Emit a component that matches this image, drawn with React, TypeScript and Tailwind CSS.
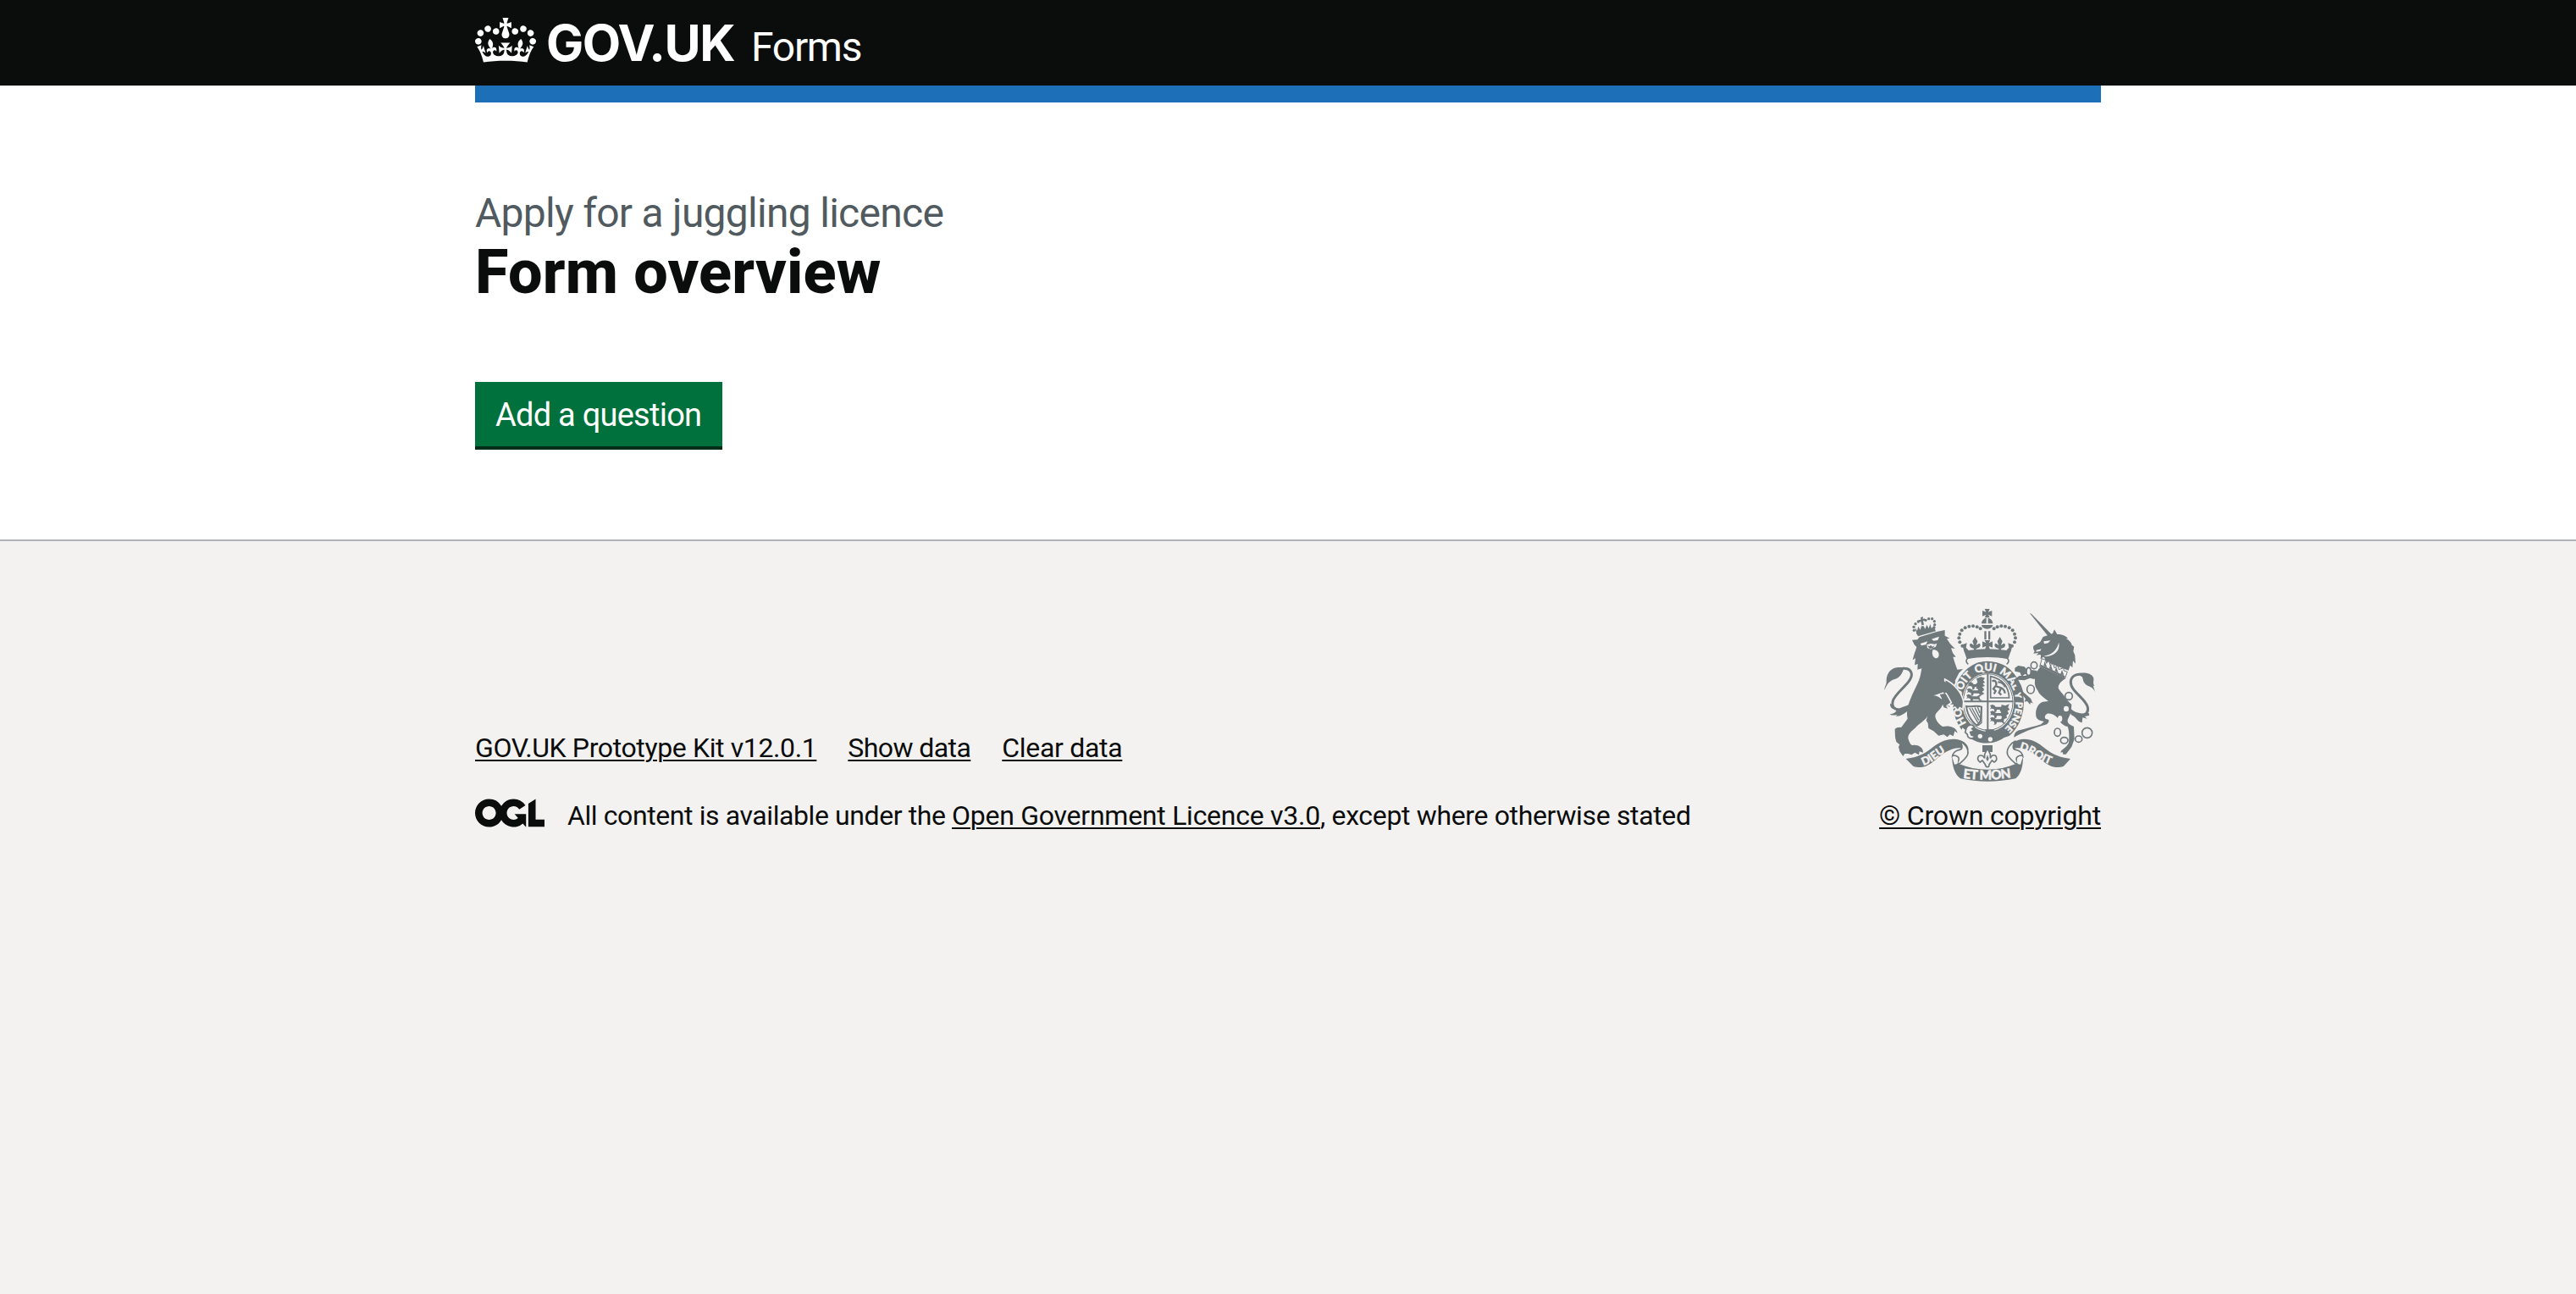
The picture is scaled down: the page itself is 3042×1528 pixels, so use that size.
const sans = "font-['Roboto','Liberation_Sans',sans-serif]";
const link = "underline decoration-2 underline-offset-[3px]";

function Crown() {
  return (
    <svg viewBox="0 0 132 97" className="mt-[21px] h-[53px] w-[72px] shrink-0 fill-white" aria-hidden="true">
      <path
        fillRule="evenodd"
        d="M25 30.2c3.5 1.5 7.7-.2 9.1-3.7 1.5-3.6-.2-7.8-3.9-9.2-3.6-1.4-7.6.3-9.1 3.9-1.4 3.5.3 7.5 3.9 9zM9 39.5c3.6 1.5 7.8-.2 9.2-3.7 1.5-3.6-.2-7.8-3.9-9.1-3.6-1.5-7.6.2-9.1 3.8-1.4 3.5.3 7.5 3.8 9zM4.4 57.2c3.5 1.5 7.7-.2 9.1-3.8 1.5-3.6-.2-7.7-3.9-9.1-3.5-1.5-7.6.3-9.1 3.8-1.4 3.5.3 7.6 3.9 9.1zm38.3-21.4c3.5 1.5 7.7-.2 9.1-3.8 1.5-3.6-.2-7.7-3.9-9.1-3.6-1.5-7.6.3-9.1 3.8-1.3 3.6.4 7.7 3.9 9.1zm64.4-5.6c-3.6 1.5-7.8-.2-9.1-3.7-1.5-3.6.2-7.8 3.8-9.2 3.6-1.4 7.7.3 9.2 3.9 1.3 3.5-.4 7.5-3.9 9zm15.9 9.3c-3.6 1.5-7.7-.2-9.1-3.7-1.5-3.6.2-7.8 3.7-9.1 3.6-1.5 7.7.2 9.2 3.8 1.5 3.5-.3 7.5-3.8 9zm4.7 17.7c-3.6 1.5-7.8-.2-9.2-3.8-1.5-3.6.2-7.7 3.9-9.1 3.6-1.5 7.7.3 9.2 3.8 1.3 3.5-.4 7.6-3.9 9.1zM89.3 35.8c-3.6 1.5-7.8-.2-9.2-3.8-1.4-3.6.2-7.7 3.9-9.1 3.6-1.5 7.7.3 9.2 3.8 1.4 3.6-.3 7.7-3.9 9.1zM69.7 17.7l8.9 4.7V9.3l-8.9 2.8c-.2-.3-.5-.6-.9-.9L72.4 0H59.6l3.5 11.2c-.3.3-.6.5-.9.9l-8.8-2.8v13.1l8.8-4.7c.3.3.6.7.9.9l-5 15.4v.1c-.2.8-.4 1.6-.4 2.4 0 4.1 3.1 7.5 7 8.1h.2c.3 0 .7.1 1 .1.4 0 .7 0 1-.1h.2c4-.6 7.1-4.1 7.1-8.1 0-.8-.1-1.7-.4-2.4V34l-5.1-15.4c.4-.2.7-.6 1-.9zM66 92.8c16.9 0 32.8 1.1 47.1 3.2 4-16.9 8.9-26.7 14-33.5l-9.6-3.4c1 4.9 1.1 7.2 0 10.2-1.5-1.4-3-4.3-4.2-8.7L108.6 76c2.8-2 5-3.2 7.5-3.3-4.4 9.4-10 11.9-13.6 11.2-4.3-.8-6.3-4.6-5.6-7.9 1-4.7 5.7-5.9 8-.5 4.3-8.7-3-11.4-7.6-8.8 7.1-7.2 7.9-13.5 2.1-21.1-8 6.1-8.1 12.3-4.5 20.8-4.7-5.4-12.1-2.5-9.5 6.2 3.4-5.2 7.9-2 7.2 3.1-.6 4.3-6.4 7.8-13.5 7.2-10.3-.9-10.9-8-11.2-13.8 2.5-.5 7.1 1.8 11 7.3L80.2 60c-4.1 4.4-8 5.3-12.3 5.4 1.4-4.4 8-11.6 8-11.6H55.5s6.4 7.2 7.9 11.6c-4.2-.1-8-1-12.3-5.4l1.4 16.4c3.9-5.5 8.5-7.7 10.9-7.3-.3 5.8-.9 12.8-11.1 13.8-7.2.6-12.9-2.9-13.5-7.2-.7-5 3.8-8.3 7.1-3.1 2.7-8.7-4.6-11.6-9.4-6.2 3.7-8.5 3.6-14.7-4.6-20.8-5.8 7.6-5 13.9 2.2 21.1-4.7-2.6-11.9.1-7.7 8.8 2.3-5.5 7.1-4.2 8.1.5.7 3.3-1.3 7.1-5.7 7.9-3.5.7-9-1.8-13.5-11.2 2.5.1 4.7 1.3 7.5 3.3l-4.7-15.4c-1.2 4.4-2.7 7.2-4.3 8.7-1.1-3-.9-5.3 0-10.2l-9.5 3.4c5 6.9 9.9 16.7 14 33.5 14.8-2.1 30.8-3.2 47.7-3.2z"
      />
    </svg>
  );
}

function OglLogo() {
  return (
    <svg viewBox="0 0 483.2 195.7" className="mr-[27px] h-[34px] w-[82px] shrink-0 fill-[#0b0c0c]" aria-hidden="true">
      <path d="M421.5 142.8V.1l-50.7 32.3v161.1h112.4v-50.7zm-122.3-9.6A47.12 47.12 0 0 1 221 97.8c0-26 21.1-47.1 47.1-47.1 16.7 0 31.4 8.7 39.7 21.8l42.7-27.2A97.63 97.63 0 0 0 268.1 0c-36.5 0-68.3 20.1-85.1 49.7A98 98 0 0 0 97.8 0C43.9 0 0 43.9 0 97.8s43.9 97.8 97.8 97.8c36.5 0 68.3-20.1 85.1-49.7a97.76 97.76 0 0 0 149.6 25.4l19.4 22.2h3v-87.8h-80l24.3 27.5zM97.8 145c-26 0-47.1-21.1-47.1-47.1s21.1-47.1 47.1-47.1 47.1 21.1 47.1 47.1S123.8 145 97.8 145" />
    </svg>
  );
}

/* Beads of the small crown on the lion and the arches of the royal crown. */
const lionBeads = [[181, 133], [180, 121], [186, 110], [196, 102], [222, 97], [233, 92], [245, 92], [253, 101], [254, 113], [252, 123]];
const crownBeads = [[352, 188], [343, 175], [340, 160], [343, 146], [350, 133], [362, 124], [376, 119], [390, 118], [404, 121], [416, 127], [464, 127], [476, 121], [490, 118], [504, 119], [518, 124], [530, 133], [537, 146], [540, 160], [537, 175], [528, 188]];

function SmallLion({ x, y }: { x: number; y: number }) {
  return (
    <path
      transform={`translate(${x} ${y})`}
      d="M0 4l8-4 8 3 4 5h18l10-6 6 2-8 6 4 10 8 2-10 2-6-6H24l-2 8-10 2 4-4-2-8-8-2-6 2 4-6z"
    />
  );
}

function Fleur({ x }: { x: number }) {
  return (
    <path
      transform={`translate(${x} 156)`}
      d="M0 0l9 16-5 14 10-7c8 2 6 14-4 17l-6 2v12h-8V42l-6-2c-10-3-12-15-4-17l10 7-5-14z"
    />
  );
}

const word = "fill-[#f3f2f1] font-['Lato','Liberation_Sans',sans-serif] font-black";

function Crest() {
  return (
    <svg viewBox="57 45 786 630" className="h-[210px] w-[262px] fill-[#6f787b]" aria-hidden="true">
      {/* lion: crown */}
      {lionBeads.map(([x, y]) => <circle key={`${x}-${y}`} cx={x} cy={y} r="5" />)}
      <path d="M204 87l9-2-1 8 7-2 1 9-7-1 3 14-8 2-3-14-6 4-1-9 7-1z" />
      <path d="M188 142l66-16 4 10-63 18z" />
      <path d="M184 124l8 10 4-15 7 12 4-13 8 0 5 10 6-14 7 12 5-15 5 15 8-8-2 14-58 14z" />
      {/* lion: tail */}
      <path d="M76 345c0-14 8-18 7-32 0-26 14-45 37-48 12-2 19 0 24 5-6 18-14 31-34 37-16 5-25 17-34 38z" />
      <path d="M126 271c24-8 43-2 46 16 4 30-58 66-66 96-5 20 4 32 26 31 15-1 26-6 38-14" fill="none" stroke="#6f787b" strokeWidth="9" />
      <path d="M94 429c10 2 19-2 24-11 14-14 28-12 50-25l-4 24c-16 6-26 22-48 20l6-6c-12 4-22 4-28-2z" />
      <path d="M108 412c-8-3-13-10-12-20l14 8z" />
      {/* lion: head, mane, body and hind legs */}
      <path d="M174 167L193 166L200 157L265 137L290 132L290 152L307 161L297 163L309 181L326 198L312 196L318 213L329 227L319 227L326 250L334 272L354 270L340 284L326 312L340 352L300 366L285 352L262 360L250 364C264 364 284 374 283 392C280 412 258 420 256 436C256 450 266 462 282 474C300 470 330 472 335 497L325 490L320 508L308 502L299 511L286 502L268 506L250 490L232 480L230 462L224 452L229 436C222 452 200 462 186 478C172 490 160 500 160 515C165 535 172 540 176 540C190 536 214 545 213 566L200 562L198 574L184 566L172 574L160 570L148 570L142 579L130 562L126 545L130 538L118 528C112 510 114 495 113 482L122 477L136 476L158 446C152 420 160 395 170 372C185 335 198 318 204 290L208 268L193 272L194 252L183 256L186 232L176 238C180 220 186 205 190 192L182 184Z" />
      <g className="fill-[#f3f2f1]">
        <path d="M203 180l26-8-6 12-16 3zM243 164l27-9-5 13-15 2z" />
        <path d="M226 184l14-4 14 2 8-3-4 12-10 4-8 5-12-4z" />
        <path d="M247 202c12-2 22 6 22 17s-8 15-14 12c-8-4-12-16-8-29z" />
      </g>
      <path d="M228 186l8 4 4-5 6 6 8-5-6 10-12 2z" />
      <path d="M272 360l22-4 10 14 10 20-8 6 2 8-14-4 6 10-14-4-4-12-10-2 8-4-10-10 10-2z" />

      {/* garter and shield */}
      <ellipse cx="444" cy="388" rx="132" ry="153" className="fill-[#f3f2f1]" />
      <ellipse cx="444" cy="388" rx="126" ry="147" />
      <ellipse cx="443" cy="388" rx="92" ry="104" className="fill-[#f3f2f1]" />
      <defs>
        <path id="motto" d="M443 504A98 114 0 0 1 443 276A98 114 0 0 1 443 504" />
      </defs>
      <g className={word} fontSize="38" stroke="#f3f2f1" strokeWidth="1.2">
        <text><textPath href="#motto" startOffset="13.5%">HO</textPath></text>
        <text><textPath href="#motto" startOffset="28.3%">SOIT</textPath></text>
        <text><textPath href="#motto" startOffset="43.4%">QUI</textPath></text>
        <text><textPath href="#motto" startOffset="56%">MAL</textPath></text>
        <text fontSize="30"><textPath href="#motto" startOffset="69.8%">Y</textPath></text>
        <text fontSize="34"><textPath href="#motto" startOffset="74.5%">PENSE</textPath></text>
      </g>
      <ellipse cx="443" cy="387" rx="88" ry="100" fill="none" stroke="#6f787b" strokeWidth="3" />
      <path d="M439 286h6v204h-6zM353 382h179v6H353z" />
      <SmallLion x={372} y={316} />
      <SmallLion x={368} y={338} />
      <SmallLion x={366} y={359} />
      <path d="M402 304l16-6 14 4-6 8 6 8-8 4 8 8-10 4 8 10-8 6 8 8-12 4-4-10-8 4 2-14-8-4 6-8-6-8 6-4z" />
      <g fill="none" stroke="#6f787b">
        <path d="M452 296v76h66c-2-36-22-66-66-76z" strokeWidth="5" />
        <path d="M458 314c8-8 16 2 14 12s12 6 20 12 12 10 10 18M470 330l-8 10 8 8-6 10M488 340l-6 14 8 8M478 316c12 0 22 8 26 18" strokeWidth="7" />
        <path d="M366 402c20 4 34-6 54 2l-4 50-12 16c-8-4-34-30-38-68z" strokeWidth="6" />
        <path d="M377 408l30 52M386 408l24 44M396 406l18 36M406 404l8 22M420 402v58l-12 10" strokeWidth="4" />
      </g>
      <SmallLion x={450} y={396} />
      <SmallLion x={450} y={418} />
      <SmallLion x={450} y={440} />
      <path d="M490 396l14 4 14-6-4 12 6 8-8 4 4 10-8 6 2 10-10 2-2 12-8-8 2-12-8-6 6-8-6-8 8-6z" />
      {/* lion: foreleg resting on the garter */}
      <path
        d="M290 306C320 320 348 350 356 384L354 414L343 407L336 417L326 405L315 411L318 398L301 398L313 389C306 376 300 362 290 350Z"
        stroke="#f3f2f1"
        strokeWidth="5"
      />
      <path d="M270 300L294 318L300 352L286 356Z" />
      {/* buckle and strap */}
      <path d="M432 484h34l-6 14h-22z" />
      <path d="M352 478c50 40 110 50 164 30l20 4c-30 26-80 34-120 22-28-8-52-22-70-40z" className="fill-[#f3f2f1]" />
      <path d="M384 484c36 22 80 32 122 24-22 20-56 30-92 22-14-4-28-10-38-18z" />
      <path d="M366 480c4-14 22-16 28-4l-8 6 8 8-14 4 4 10 12 4c-8 14-26 8-26-6l-8-8z" fill="#f3f2f1" stroke="#6f787b" strokeWidth="5" />
      <circle cx="415" cy="508" r="8" className="fill-[#f3f2f1]" />
      <circle cx="451" cy="519" r="8" className="fill-[#f3f2f1]" />

      {/* royal crown */}
      <path d="M354 206c50-14 122-14 172 0l-12 32c10 8 6 18-4 22-50-24-90-24-138 0-10-4-14-14-2-24z" className="fill-[#f3f2f1]" />
      <path d="M358 206c54-10 112-10 166 0l-10 29c-48-9-98-9-146 0z" />
      <path d="M371 232c-8 6-6 16 2 21M511 232c8 6 6 16-2 21" fill="none" stroke="#6f787b" strokeWidth="5" />
      <Fleur x={397} />
      <Fleur x={485} />
      <path d="M352 184l16-6-3 16 13 14h-20zM530 184l-16-6 3 16-13 14h20z" />
      {crownBeads.map(([x, y]) => <circle key={`${x}-${y}`} cx={x} cy={y} r="6" />)}
      <path d="M430 136h7v30h-7zM444 136h7v30h-7zM423 172l13 6-5-10h20l-5 10 13-6v22l-13-5 5 16h-20l5-16-13 5z" />
      <path d="M420 109a20 20 0 0 1 17-20v20zM443 89a20 20 0 0 1 17 20h-17zM420 114h40a20 14 0 0 1-40 0z" />
      <path d="M431 57h18l-5 11 13-5v20l-13-5 5 10h-18l5-10-13 5V63l13 5z" />

      {/* unicorn: tail */}
      <path d="M824 358c-4-14-10-22-24-27-20-8-20-22-22-33 8-8 20-10 28-4 12 8 6 22 10 34-4-2-2-4-2-4z" />
      <path d="M758 286c24-6 52-2 58 14 4 10-4 18 4 30l-16-4c-18-6-24-14-26-27z" />
      <path d="M790 293c-28-10-52-2-54 22-2 34 52 58 60 90 4 18-6 28-24 28-16 0-24-4-36-14" fill="none" stroke="#6f787b" strokeWidth="9" />
      <path d="M732 404c10 18 28 20 44 24l24-2 2 8-16 4 8 8-16-4-2 18c-16-2-20-18-32-24-8-4-12-12-12-32z" />
      {/* unicorn: horn, head and mane */}
      <path d="M590 71l7 4 71 72-11 8z" />
      <path d="M604 188l24-14 10-18 18-6 16-6 6-14 10 17c18 0 30 6 38 14l-6 2c12 6 18 14 20 22l8 6-3 16 6 14 2 30-9-10-2 24-8-8-6 18-84-32c2-10 0-14-6-16l-8 8c-4-4 4-12-2-16l-14 2 8-8-18 2 4-8c-4-4-6-12-4-19z" />
      <g className="fill-[#f3f2f1]">
        <path d="M640 172l24-3-8 9-14 3zM614 203l18-4-4 7-14 3z" />
        <path d="M694 176c4 26-10 46-46 50l-8-2c34-6 46-22 54-48z" />
      </g>
      {/* unicorn: body and legs */}
      <path d="M629 262l90 40c-18 12-30 24-26 38 8 14 18 18 24 34l22 22-2 28-12 26c-2 14 10 18 22 24l2 44-10 28-20 26-10 0-2-8-8 2c4-10 16-16 22-22l8-12c2-20 2-44-4-58-8 0-22-8-28-20-8-14-24-28-44-26-10 4-12 18-2 20 12 0 8 12 0 18l-34 10-34 12-34 16-14 8c0-14 8-24 22-26 24-6 48-12 74-20l10-10-14-4c-14-4-16-16-14-34 4-16 10-26 24-32l20-2c-16-12-32-22-38-38-8-10-12-22-10-34 0-20 6-34 20-50z" />
      <path d="M612 282l-18 10-20-4-12 8-6-14-18-4 0-12 12-8 22 4 10 12 20 0 14 2 4 20-14 10-14-4-20 8-24-2 12 20 8 24 26 22 8 18-8-4-2 8-10-12-10 2 4-10-12-16-14-20-12-22-4-10 20-14 20 0z" />
      {/* unicorn: coronet */}
      <path d="M634 233l12 5 4 12 8-10 6 18 10-8 4 16 12-8 4 14 16-6 2 10 12 4-9 24-89-42z" fill="#f3f2f1" stroke="#6f787b" strokeWidth="3" strokeLinejoin="round" />
      <path d="M630 254l86 41-3 7-86-41zM640 258l4-16 8 22zM660 268l4-16 8 22zM680 277l4-15 8 21zM700 287l5-14 7 19z" />
      {/* chain */}
      <g fill="#f3f2f1" stroke="#6f787b" strokeWidth="5">
        <ellipse cx="606" cy="257" rx="11" ry="12" />
        <ellipse cx="587" cy="279" rx="8" ry="14" />
        <ellipse cx="594" cy="342" rx="13" ry="15" />
        <ellipse cx="729" cy="366" rx="13" ry="13" />
        <ellipse cx="689" cy="494" rx="11" ry="14" />
        <ellipse cx="713" cy="523" rx="13" ry="11" />
        <ellipse cx="764" cy="518" rx="12" ry="11" />
        <circle cx="794" cy="496" r="18" />
      </g>
      <g className="fill-[#f3f2f1]">
        <ellipse cx="720" cy="411" rx="9" ry="10" />
        <ellipse cx="698" cy="446" rx="8" ry="11" />
      </g>

      {/* scroll */}
      <path d="M152 588c36-4 62-14 92-38 30-26 68-38 100-28 20 6 30 22 30 34l-30-6c-32-2-62 20-90 44-26 22-48 30-76 20z" />
      <path d="M735 588c-36-4-62-14-92-38-30-26-62-38-94-28-20 6-30 22-30 34l26-6c32-2 62 20 90 44 26 22 48 30 76 20z" />
      <g fill="#f3f2f1" stroke="#6f787b" strokeWidth="5">
        <path d="M342 524c18 8 34 30 29 48-4 12-16 22-27 32l-12 2c8-14 12-20 2-26-12-6-18-4-18 4 0-14 10-26 26-28 14-2 10-22 0-32z" />
        <path d="M541 524c-18 8-34 30-29 48 4 12 16 22 27 32l12 2c-8-14-12-20-2-26 12-6 18-4 18 4 0-14-10-26-26-28-14-2-10-22 0-32z" />
      </g>
      <path d="M315 582c4 10 14 14 20 22 70 30 142 30 212 0 8-8 16-12 20-22 0 30-6 60-26 76-66 14-134 14-196 0-22-16-28-46-30-76z" />
      <path d="M316 582c12-10 26 6 18 24l-10 2zM566 582c-12-10-26 6-18 24l10 2z" className="fill-[#f3f2f1]" />
      <defs>
        <path id="scroll-left" d="M214 612C262 596 272 566 322 554" />
        <path id="scroll-mid" d="M354 656Q441 668 530 654" />
        <path id="scroll-right" d="M553 556C604 566 624 600 678 612" />
      </defs>
      <g className={word} stroke="#f3f2f1" strokeWidth="1.2">
        <text fontSize="39"><textPath href="#scroll-left">DIEU</textPath></text>
        <text fontSize="46"><textPath href="#scroll-mid" textLength="172">ET MON</textPath></text>
        <text fontSize="39"><textPath href="#scroll-right">DROIT</textPath></text>
      </g>
      {/* fleur-de-lis pendant */}
      <path d="M423 540h36v24h-36z" />
      <path
        d="M441 552l10 20 0 14c6-14 20-14 22-2 2 10-4 14-8 16l-8-6-6 8-4 6c2 10-12 14-14 0l-4-6-6-8-8 6c-6-4-10-8-8-16 4-12 18-10 24 2l0-14z"
        fill="#f3f2f1"
        stroke="#6f787b"
        strokeWidth="5"
      />
      <path d="M441 574l5 14-5 10-5-10z" />
    </svg>
  );
}

export default function App() {
  return (
    <div className={`flex min-h-screen flex-col bg-white text-[#0b0c0c] ${sans}`}>
      <header className="bg-[#0b0c0c] text-white">
        <div className="mx-auto flex h-[101px] w-[1920px] items-start">
          <Crown />
          <div className="ml-3 flex items-baseline">
            <span className="mt-4 font-['Inter','Liberation_Sans',sans-serif] text-[59px] leading-[69px] font-bold tracking-[-1.5px]">GOV.UK</span>
            <span className="ml-5 text-[48px] tracking-[-1.3px]">Forms</span>
          </div>
        </div>
      </header>
      <main className="mx-auto h-[536px] w-[1920px] border-t-[20px] border-[#1d70b8]">
        <h1 className="pt-[101px] text-[72px] leading-[79px] font-extrabold tracking-[0.2px]">
          <span className="block text-[48px] leading-[60px] font-normal tracking-[-0.72px] text-[#505a5f]">Apply for a juggling licence</span>
          Form overview
        </h1>
        <button className="mt-[90px] block h-[76px] w-[292px] bg-[#00703c] pt-5 pb-[18px] pl-6 text-left text-[38px] leading-[38px] tracking-[-0.75px] whitespace-nowrap text-white shadow-[0_4px_0_#002d18]">
          Add a question
        </button>
      </main>
      <footer className="grow border-t-2 border-[#b1b4b6] bg-[#f3f2f1] pt-[76px] text-[32px] leading-10">
        <div className="mx-auto flex w-[1920px] items-end justify-between">
          <div>
            <nav className="flex gap-[37px]">
              <a className={`${link} tracking-[-0.38px]`}>GOV.UK Prototype Kit v12.0.1</a>
              <a className={`${link} tracking-[-0.58px]`}>Show data</a>
              <a className={`${link} tracking-[-0.31px]`}>Clear data</a>
            </nav>
            <div className="mt-10 flex items-start">
              <OglLogo />
              <p className="whitespace-pre">
                <span className="tracking-[-0.41px]">All content is available under the </span>
                <a className={`${link} tracking-[-0.26px]`}>Open Government Licence v3.0</a>
                <span className="tracking-[-0.35px]">, except where otherwise stated</span>
              </p>
            </div>
          </div>
          <div className="flex flex-col items-end">
            <Crest />
            <a className={`${link} mt-[18px] tracking-[-0.18px]`}>© Crown copyright</a>
          </div>
        </div>
      </footer>
    </div>
  );
}
